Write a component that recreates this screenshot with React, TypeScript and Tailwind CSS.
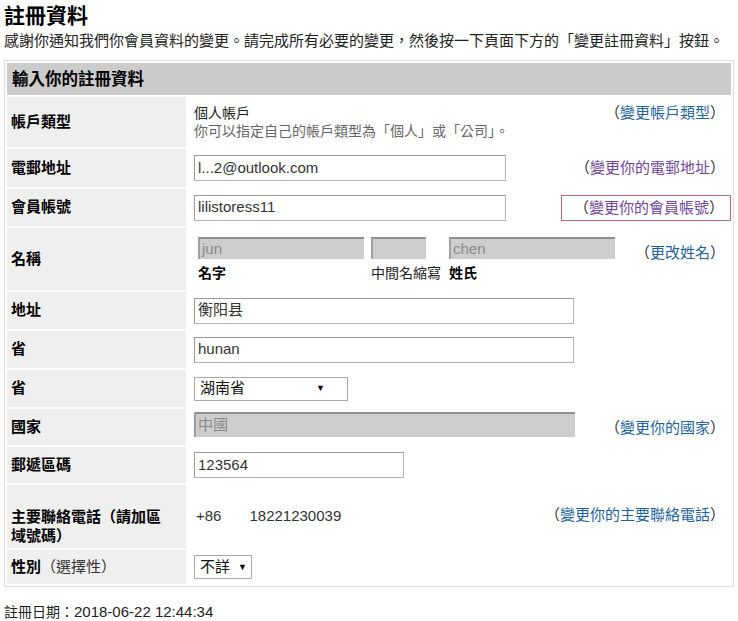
import React from "react";

const FONT = { fontFamily: '"Liberation Sans", "Noto Sans CJK TC", Arial, sans-serif' };

function Link({ text, visited, boxed }: { text: string; visited?: boolean; boxed?: boolean }) {
  const color = visited ? "text-[#70469a]" : "text-[#22639b]";
  return (
    <span
      className={
        "inline-flex whitespace-nowrap text-[15px] leading-[18px] text-[#333] " +
        (boxed ? "h-[26px] items-center border border-[#c46082] pl-[12px] pr-[6px] -mr-[6px]" : "")
      }
    >
      <span className="inline-block w-[15px] text-right">（</span>
      <span className={color}>{text}</span>
      <span className="inline-block w-[15px] text-left">）</span>
    </span>
  );
}

function TextInput({ value, w }: { value: string; w: string }) {
  return (
    <div
      className={`${w} flex h-[26px] items-center border border-[#b4b4b4] border-t-[#9a9a9a] border-l-[#9a9a9a] bg-white pl-[3px] text-[15px] text-[#333]`}
    >
      {value}
    </div>
  );
}

function GrayInput({ value, w, h = "h-[22px]" }: { value: string; w: string; h?: string }) {
  return (
    <div
      className={`${w} ${h} flex items-center border-t-2 border-l-2 border-t-[#8f8f8f] border-l-[#a0a0a0] bg-[#cdcdcd] pl-[2px] text-[15px] text-[#8a8a8a]`}
    >
      {value}
    </div>
  );
}

function FakeSelect({ value, w, pr }: { value: string; w: string; pr: string }) {
  return (
    <div
      className={`${w} ${pr} flex h-[24px] items-center justify-between border border-[#a9a9a9] bg-white pl-[5px] text-[15px] text-[#111]`}
    >
      <span>{value}</span>
      <span className="text-[9px] leading-none text-black">▼</span>
    </div>
  );
}

function Label({ children, h, className = "" }: { children: React.ReactNode; h: string; className?: string }) {
  return (
    <div className={`${h} flex bg-[#efefef] pl-[4px] text-[15px] font-bold text-black ${className || "items-center"}`}>
      {children}
    </div>
  );
}

function Cell({ children, h, className = "" }: { children: React.ReactNode; h: string; className?: string }) {
  return (
    <div className={`${h} flex items-center justify-between bg-white pl-[6px] pr-[6px] ${className}`}>{children}</div>
  );
}

export default function App() {
  return (
    <div className="min-h-[621px] w-[738px] bg-white pl-[4px] text-[#222]" style={FONT}>
      <h1 className="pt-[3px] text-[21px] font-bold leading-[26px] text-black">註冊資料</h1>
      <p className="mt-[3px] whitespace-nowrap text-[15px] leading-[18px] text-[#222]">
        感謝你通知我們你會員資料的變更。請完成所有必要的變更，然後按一下頁面下方的「變更註冊資料」按鈕。
      </p>

      <div className="mt-[10px] grid w-[730px] grid-cols-[179px_543px] gap-[2px] border border-[#dcdcdc] p-[2px]">
        <div className="col-span-2 flex h-[32px] items-center bg-[#cccccc] pl-[5px] text-[16.5px] font-bold text-black">
          輸入你的註冊資料
        </div>

        <Label h="h-[50px]">帳戶類型</Label>
        <Cell h="h-[50px]" className="!items-start pt-[7px]">
          <div className="text-[14px] leading-[18px]">
            <div className="text-[#222]">個人帳戶</div>
            <div className="text-[#666]">你可以指定自己的帳戶類型為「個人」或「公司」。</div>
          </div>
          <Link text="變更帳戶類型" />
        </Cell>

        <Label h="h-[38px]">電郵地址</Label>
        <Cell h="h-[38px]">
          <TextInput value="l...2@outlook.com" w="w-[312px]" />
          <Link text="變更你的電郵地址" visited />
        </Cell>

        <Label h="h-[37px]">會員帳號</Label>
        <Cell h="h-[37px]">
          <TextInput value="lilistoress11" w="w-[312px]" />
          <Link text="變更你的會員帳號" visited boxed />
        </Cell>

        <Label h="h-[62px]">名稱</Label>
        <Cell h="h-[62px]" className="!pl-[10px]">
          <div className="flex text-[14px] leading-[18px]">
            <div className="w-[166px]">
              <GrayInput value="jun" w="w-[166px]" />
              <div className="mt-[5px] font-bold text-black">名字</div>
            </div>
            <div className="ml-[7px] w-[55px]">
              <GrayInput value="" w="w-[55px]" />
              <div className="mt-[5px] whitespace-nowrap text-[#222]">中間名縮寫</div>
            </div>
            <div className="ml-[23px] w-[166px]">
              <GrayInput value="chen" w="w-[166px]" />
              <div className="mt-[5px] font-bold text-black">姓氏</div>
            </div>
          </div>
          <span className="pb-[12px]">
            <Link text="更改姓名" />
          </span>
        </Cell>

        <Label h="h-[37px]">地址</Label>
        <Cell h="h-[37px]">
          <TextInput value="衡阳县" w="w-[380px]" />
        </Cell>

        <Label h="h-[37px]">省</Label>
        <Cell h="h-[37px]">
          <TextInput value="hunan" w="w-[380px]" />
        </Cell>

        <Label h="h-[37px]">省</Label>
        <Cell h="h-[37px]">
          <FakeSelect value="湖南省" w="w-[154px]" pr="pr-[22px]" />
        </Cell>

        <Label h="h-[36px]">國家</Label>
        <Cell h="h-[36px]" className="!items-start pt-[3px]">
          <GrayInput value="中國" w="w-[381px]" h="h-[25px]" />
          <span className="pt-[4px]">
            <Link text="變更你的國家" />
          </span>
        </Cell>

        <Label h="h-[36px]">郵遞區碼</Label>
        <Cell h="h-[36px]">
          <TextInput value="123564" w="w-[210px]" />
        </Cell>

        <Label h="h-[63px]" className="items-end pb-[3px] leading-[19px]">
          <span>
            主要聯絡電話（請加區
            <br />
            域號碼）
          </span>
        </Label>
        <Cell h="h-[63px]">
          <div className="pl-[2px] text-[15px] text-[#333]">
            <span>+86</span>
            <span className="ml-[28px]">18221230039</span>
          </div>
          <span className="pb-[4px]">
            <Link text="變更你的主要聯絡電話" />
          </span>
        </Cell>

        <Label h="h-[34px]">
          <span>性別</span>
          <span className="font-normal text-[#333]">（選擇性）</span>
        </Label>
        <Cell h="h-[34px]">
          <FakeSelect value="不詳" w="w-[58px]" pr="pr-[4px]" />
        </Cell>
      </div>

      <p className="mt-[16px] text-[14px] leading-[18px] text-[#222]">
        註冊日期：<span className="text-[15px]">2018-06-22 12:44:34</span>
      </p>
    </div>
  );
}
